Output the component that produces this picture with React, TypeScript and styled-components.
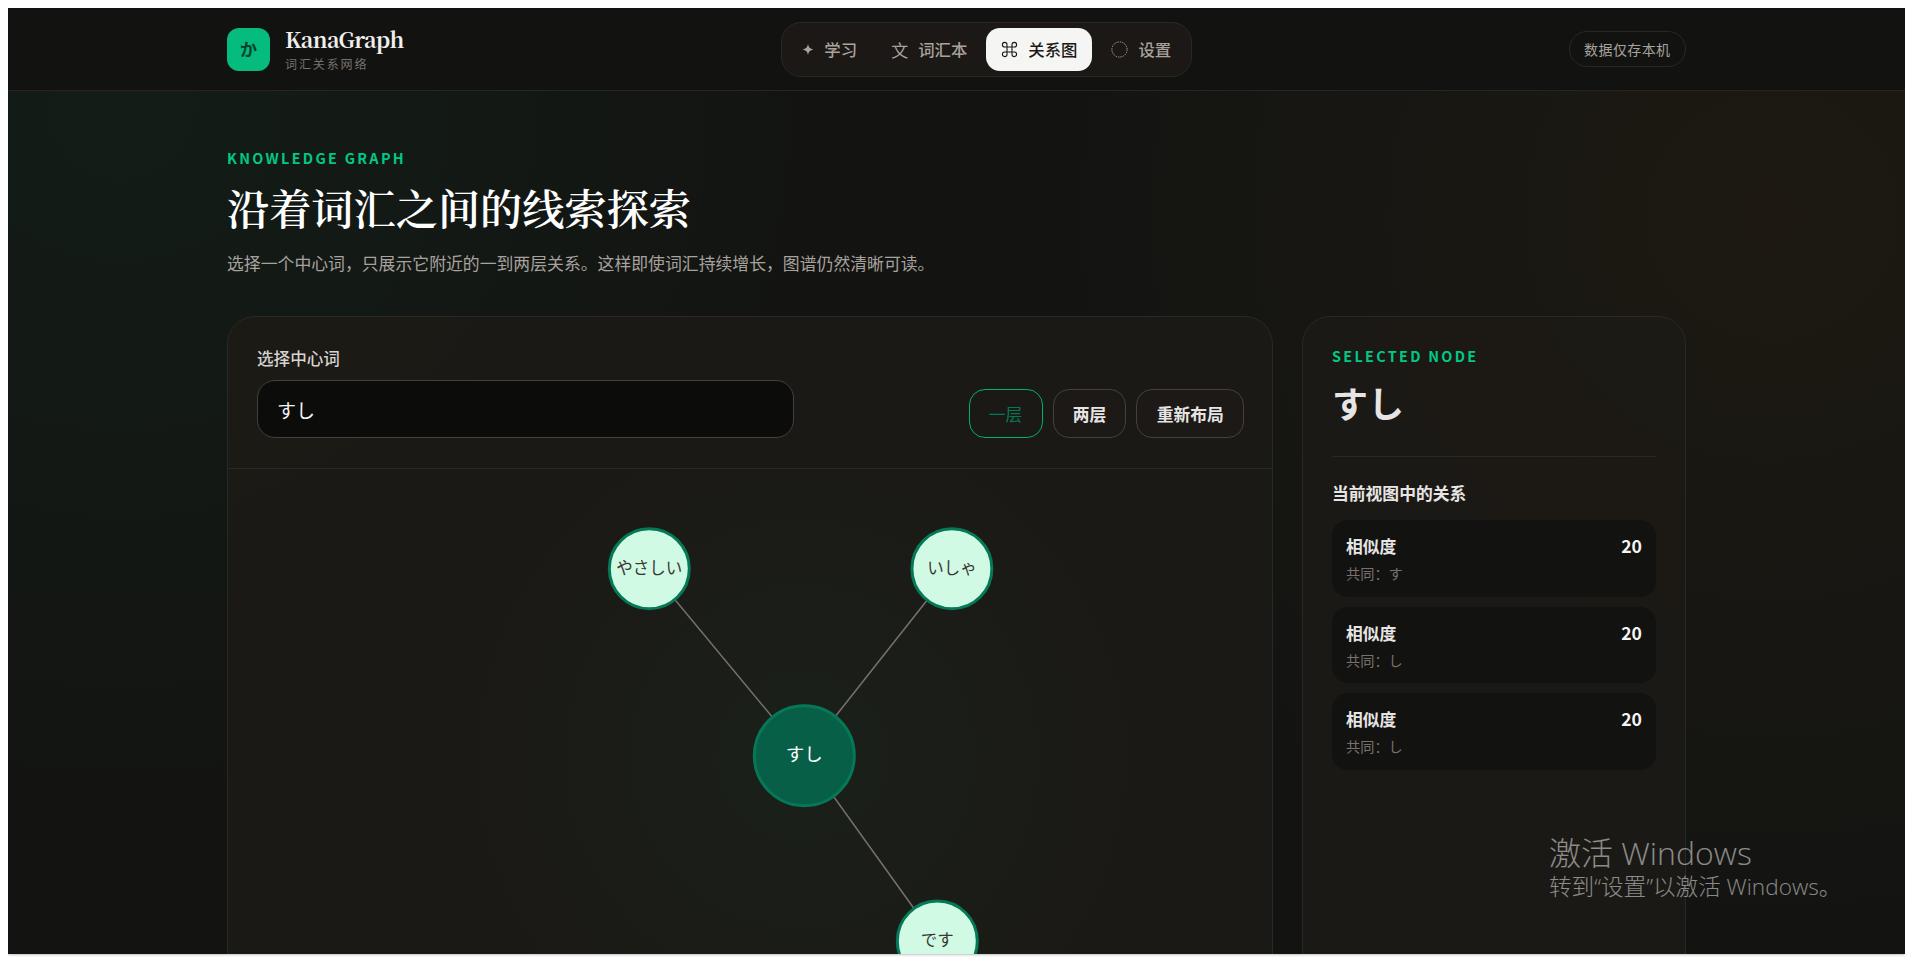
import type { ReactNode } from 'react';
import styled, { createGlobalStyle } from 'styled-components';

const GlobalStyle = createGlobalStyle`
  html, body {
    height: 100%;
    overflow: hidden;
    background: #ffffff;
  }
  body {
    margin: 8px;
    font-family: "Noto Sans CJK SC", "Noto Sans", sans-serif;
  }
`;

const Frame = styled.div`
  position: relative;
  height: 946px;
  overflow: hidden;
  color: #e7e5e4;
  box-shadow: 0 0 3px rgba(0, 0, 0, 0.45);
  background:
    radial-gradient(circle at 6% 10%, rgba(16, 185, 129, 0.05), transparent 36%),
    radial-gradient(circle at 93% 22%, rgba(120, 72, 20, 0.1), transparent 38%),
    #131412;
`;

const Header = styled.header`
  height: 82px;
  border-bottom: 1px solid #262523;
  background: #121311;
`;

const Wrap = styled.div`
  width: 1459px;
  margin: 0 auto;
`;

const HeaderRow = styled(Wrap)`
  height: 100%;
  display: flex;
  align-items: center;
  justify-content: space-between;
`;

const Brand = styled.div`
  width: 178px;
  display: flex;
  align-items: center;
  gap: 15px;
`;

const Logo = styled.div`
  flex-shrink: 0;
  width: 43px;
  height: 43px;
  padding-bottom: 1px;
  box-sizing: border-box;
  border-radius: 12px;
  background: #06bb7e;
  color: #06402f;
  font-size: 17px;
  font-weight: 700;
  display: flex;
  align-items: center;
  justify-content: center;
`;

const BrandText = styled.div`
  padding-bottom: 1px;
`;

const BrandName = styled.div`
  font-family: "Noto Serif CJK SC", "Liberation Serif", serif;
  font-size: 21.6px;
  font-weight: 700;
  line-height: 26px;
  letter-spacing: -0.6px;
  color: #f0efed;
`;

const BrandSub = styled.div`
  margin-top: 4px;
  font-size: 12px;
  line-height: 16px;
  letter-spacing: 1.9px;
  color: #78716c;
`;

const Nav = styled.nav`
  height: 55px;
  box-sizing: border-box;
  padding: 5px;
  display: flex;
  gap: 4px;
  border: 1px solid #2a2724;
  border-radius: 20px;
  background: #1b1815;
`;

const NavItem = styled.div<{ $active?: boolean }>`
  height: 43px;
  padding: 0 15px;
  display: flex;
  align-items: center;
  gap: 10px;
  border-radius: 14px;
  font-size: 16.4px;
  font-weight: 500;
  background: ${p => (p.$active ? '#f5f5f4' : 'transparent')};
  color: ${p => (p.$active ? '#1c1917' : '#a8a29e')};
`;

const NavGlyph = styled.span`
  font-size: 17px;
  font-weight: 400;
  line-height: 1;
`;

const NavSvg = styled.svg`
  flex-shrink: 0;
  fill: none;
  stroke: currentColor;
`;

const Badge = styled.div`
  height: 36px;
  box-sizing: border-box;
  padding: 0 14.5px;
  display: flex;
  align-items: center;
  border: 1px solid #2a2724;
  border-radius: 18px;
  font-size: 14px;
  letter-spacing: 0.4px;
  color: #a8a29e;
`;

const Main = styled(Wrap)`
  padding-top: 57px;
`;

const Eyebrow = styled.div`
  font-size: 14.4px;
  font-weight: 700;
  line-height: 20px;
  letter-spacing: 2.3px;
  color: #00c985;
`;

const Title = styled.h1`
  margin: 11px 0 0;
  font-family: "Noto Serif CJK SC", "Noto Sans CJK SC", serif;
  font-size: 42.2px;
  font-weight: 600;
  line-height: 56px;
  color: #ffffff;
`;

const Lead = styled.p`
  margin: 15px 0 0;
  font-size: 16.85px;
  line-height: 26px;
  color: #a8a29e;
`;

const Columns = styled.div`
  margin-top: 40px;
  display: grid;
  grid-template-columns: 1fr 384px;
  gap: 29px;
`;

const Card = styled.section`
  border: 1px solid #292825;
  border-radius: 28px;
  background: rgba(28, 26, 22, 0.88);
`;

const Toolbar = styled.div`
  padding: 29px 28px 30px 29px;
  display: flex;
  align-items: flex-end;
  justify-content: space-between;
  border-bottom: 1px solid #292825;
`;

const Field = styled.label`
  width: 537px;
  display: block;
`;

const FieldLabel = styled.div`
  margin-bottom: 10px;
  font-size: 16.6px;
  font-weight: 500;
  line-height: 24px;
  color: #d6d3d1;
`;

const Input = styled.input`
  width: 100%;
  height: 58px;
  box-sizing: border-box;
  padding: 0 19px;
  border: 1px solid #44403c;
  border-radius: 18px;
  outline: none;
  background: #0c0c0a;
  font-family: inherit;
  font-size: 19px;
  color: #f5f5f4;
`;

const Actions = styled.div`
  display: flex;
  gap: 10px;
`;

const ActionButton = styled.button<{ $active?: boolean }>`
  height: 49px;
  padding: 0 19.2px;
  border: 1px solid ${p => (p.$active ? '#00ad78' : '#44403c')};
  border-radius: 16px;
  background: ${p => (p.$active ? 'transparent' : '#1c1917')};
  font-family: inherit;
  font-size: 16.8px;
  font-weight: ${p => (p.$active ? 400 : 700)};
  color: ${p => (p.$active ? '#047857' : '#e7e5e4')};
`;

const GraphArea = styled.div`
  height: 640px;
  background: radial-gradient(circle at 55% 45%, rgba(16, 185, 129, 0.045), transparent 52%);
`;

const GraphSvg = styled.svg`
  display: block;
  width: 100%;
  height: 100%;
`;

const NodeLabel = styled.text<{ $center?: boolean }>`
  font-family: "Noto Sans CJK JP", sans-serif;
  font-size: ${p => (p.$center ? 18.5 : 16.5)}px;
  fill: ${p => (p.$center ? '#ffffff' : '#3a3633')};
  text-anchor: middle;
  dominant-baseline: central;
`;

const SideCard = styled(Card)`
  padding: 29px 29px 30px;
`;

const NodeName = styled.div`
  margin-top: 10px;
  padding-bottom: 28px;
  border-bottom: 1px solid #292825;
  font-family: "Noto Sans CJK JP", sans-serif;
  font-size: 36px;
  font-weight: 700;
  line-height: 52px;
  color: #e7e5e4;
`;

const SideHeading = styled.h3`
  margin: 24px 0 15px;
  font-size: 16.8px;
  font-weight: 700;
  line-height: 24px;
  color: #e7e5e4;
`;

const RelationList = styled.div`
  display: flex;
  flex-direction: column;
  gap: 10px;
`;

const Relation = styled.div`
  height: 76.5px;
  box-sizing: border-box;
  padding: 14px 14px 0;
  border-radius: 16px;
  background: #121211;
`;

const RelationTop = styled.div`
  display: flex;
  justify-content: space-between;
  font-size: 16.8px;
  font-weight: 700;
  line-height: 24px;
  color: #e7e5e4;
`;

const RelationScore = styled.span`
  font-size: 17.6px;
  color: #f5f5f4;
`;

const RelationNote = styled.div`
  margin-top: 5px;
  font-size: 14.2px;
  line-height: 20px;
  color: #78716c;
`;

const Watermark = styled.div`
  position: absolute;
  left: 1541px;
  top: 825px;
  font-family: "Open Sans", "Noto Sans CJK SC", sans-serif;
  font-weight: 300;
  color: rgba(255, 255, 255, 0.5);
  pointer-events: none;
`;

const WatermarkTitle = styled.div`
  font-size: 32px;
  line-height: 39px;
`;

const WatermarkText = styled.div`
  font-size: 22.6px;
  line-height: 30px;
`;

const StarIcon = () => (
  <NavSvg width="12" height="17" viewBox="0 0 12 17">
    <path d="M6 3 C6.6 6.4 8 7.9 11.4 8.5 C8 9.1 6.6 10.6 6 14 C5.4 10.6 4 9.1 .6 8.5 C4 7.9 5.4 6.4 6 3Z" fill="currentColor" stroke="none" />
  </NavSvg>
);

const CommandIcon = () => (
  <NavSvg width="17" height="17" viewBox="0 0 17 17" strokeWidth="1.1">
    <path d="M6 6H11V11H6ZM6 6V3.6A2.3 2.3 0 1 0 3.6 6H6M11 6H13.4A2.3 2.3 0 1 0 11 3.6V6M11 11V13.4A2.3 2.3 0 1 0 13.4 11H11M6 11H3.6A2.3 2.3 0 1 0 6 13.4V11" />
  </NavSvg>
);

const DashedCircleIcon = () => (
  <NavSvg width="17" height="17" viewBox="0 0 17 17" strokeWidth="1" strokeDasharray="1.4 1">
    <circle cx="8.5" cy="8.5" r="7.6" />
  </NavSvg>
);

const navItems: { icon: ReactNode; label: string; active?: boolean }[] = [
  { icon: <StarIcon />, label: '学习' },
  { icon: <NavGlyph>文</NavGlyph>, label: '词汇本' },
  { icon: <CommandIcon />, label: '关系图', active: true },
  { icon: <DashedCircleIcon />, label: '设置' },
];

const center = { x: 576.3, y: 286.7, label: 'すし' };
const nodes = [
  { x: 421.3, y: 99.7, label: 'やさしい' },
  { x: 723.9, y: 99.7, label: 'いしゃ' },
  { x: 709.3, y: 472, label: 'です' },
];

const relations = ['す', 'し', 'し'];

export default function App() {
  return (
    <Frame>
      <GlobalStyle />
      <Header>
        <HeaderRow>
          <Brand>
            <Logo>か</Logo>
            <BrandText>
              <BrandName>KanaGraph</BrandName>
              <BrandSub>词汇关系网络</BrandSub>
            </BrandText>
          </Brand>
          <Nav>
            {navItems.map(item => (
              <NavItem key={item.label} $active={item.active}>
                {item.icon}
                {item.label}
              </NavItem>
            ))}
          </Nav>
          <Badge>数据仅存本机</Badge>
        </HeaderRow>
      </Header>
      <Main>
        <Eyebrow>KNOWLEDGE GRAPH</Eyebrow>
        <Title>沿着词汇之间的线索探索</Title>
        <Lead>选择一个中心词，只展示它附近的一到两层关系。这样即使词汇持续增长，图谱仍然清晰可读。</Lead>
        <Columns>
          <Card>
            <Toolbar>
              <Field>
                <FieldLabel>选择中心词</FieldLabel>
                <Input defaultValue="すし" />
              </Field>
              <Actions>
                <ActionButton $active>一层</ActionButton>
                <ActionButton>两层</ActionButton>
                <ActionButton>重新布局</ActionButton>
              </Actions>
            </Toolbar>
            <GraphArea>
              <GraphSvg viewBox="0 0 1044 640">
                {nodes.map(n => (
                  <line key={n.label} x1={center.x} y1={center.y} x2={n.x} y2={n.y} stroke="#78716c" strokeWidth="1.5" />
                ))}
                {nodes.map(n => (
                  <g key={n.label}>
                    <circle cx={n.x} cy={n.y} r="40" fill="#d1fae5" stroke="#047857" strokeWidth="3" />
                    <NodeLabel x={n.x} y={n.y - 2}>{n.label}</NodeLabel>
                  </g>
                ))}
                <circle cx={center.x} cy={center.y} r="50" fill="#065f46" stroke="#047857" strokeWidth="3" />
                <NodeLabel $center x={center.x} y={center.y - 3}>{center.label}</NodeLabel>
              </GraphSvg>
            </GraphArea>
          </Card>
          <SideCard>
            <Eyebrow>SELECTED NODE</Eyebrow>
            <NodeName>すし</NodeName>
            <SideHeading>当前视图中的关系</SideHeading>
            <RelationList>
              {relations.map((kana, i) => (
                <Relation key={i}>
                  <RelationTop>
                    相似度
                    <RelationScore>20</RelationScore>
                  </RelationTop>
                  <RelationNote>共同：{kana}</RelationNote>
                </Relation>
              ))}
            </RelationList>
          </SideCard>
        </Columns>
      </Main>
      <Watermark>
        <WatermarkTitle>激活 Windows</WatermarkTitle>
        <WatermarkText>转到“设置”以激活 Windows。</WatermarkText>
      </Watermark>
    </Frame>
  );
}
